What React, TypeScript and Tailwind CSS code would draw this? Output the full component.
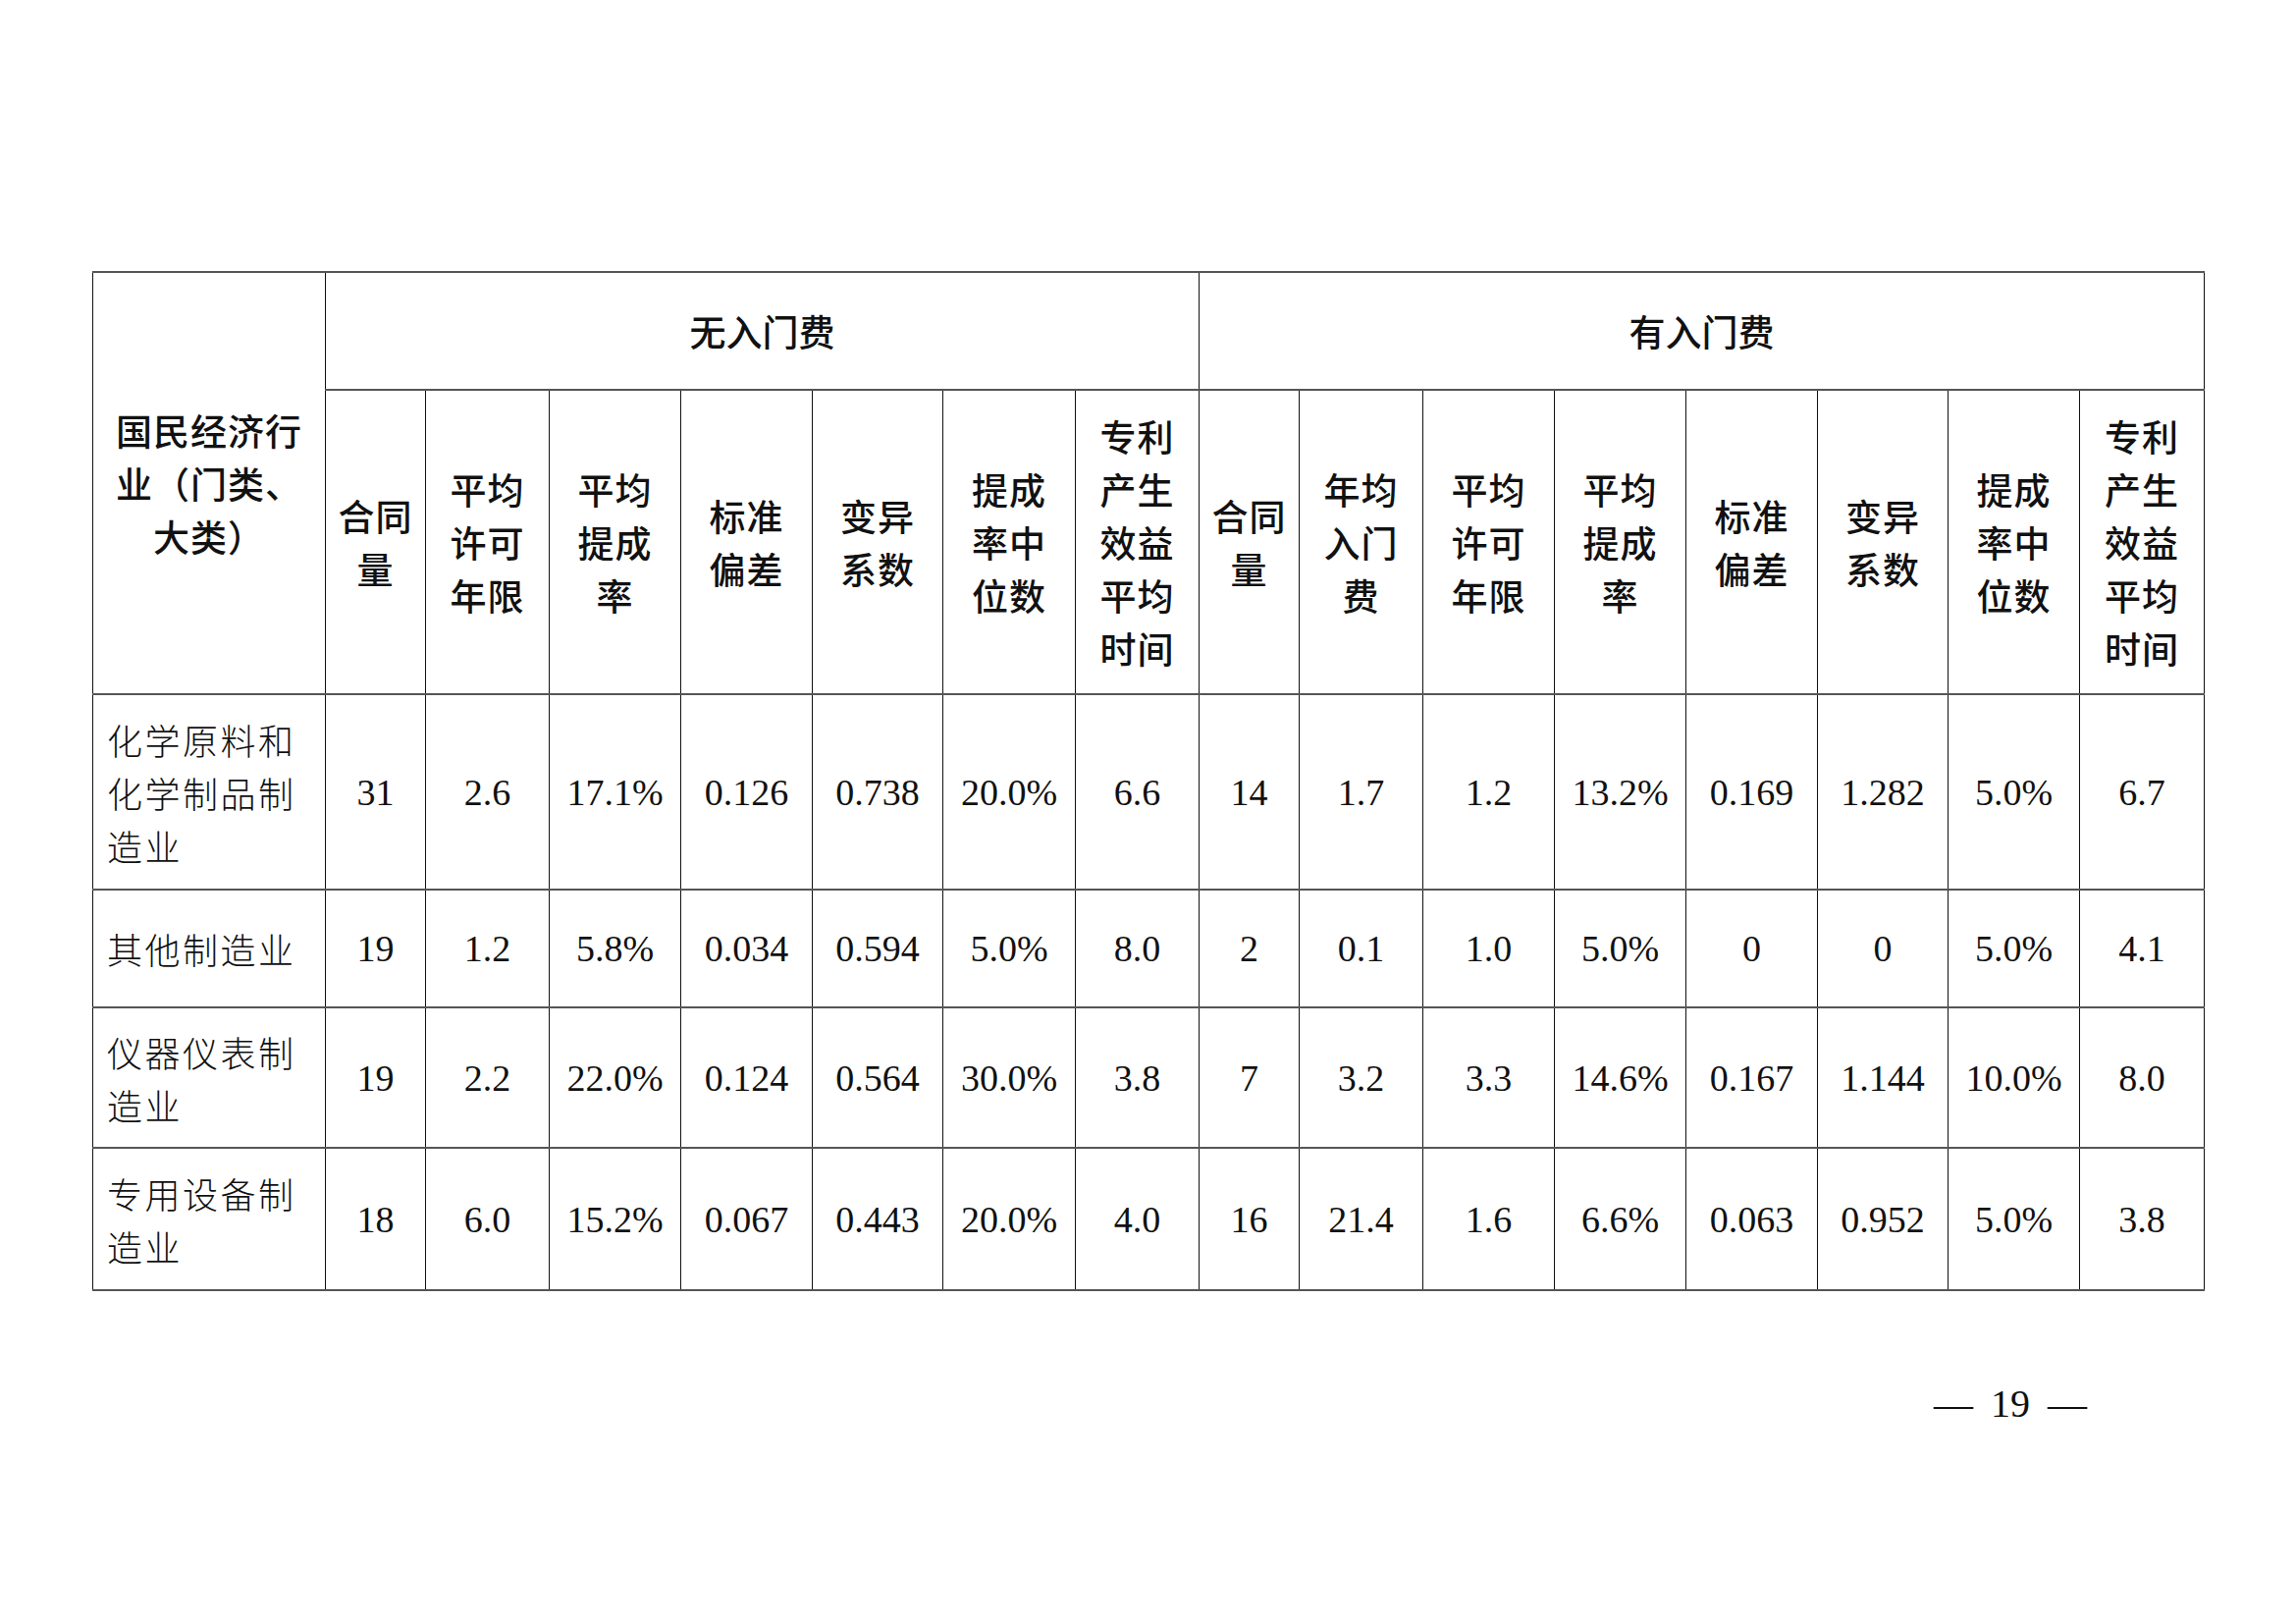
import React from 'react';

const cjkSans = "font-['Noto_Sans_CJK_SC','Noto_Sans',sans-serif]";
const serif = "font-['Liberation_Serif','Noto_Sans_CJK_SC',serif]";

export default function App() {
  const colWidths = [237, 102, 126, 134, 134, 133, 135, 126, 102, 126, 134, 134, 134, 133, 134, 127];

  // sub headers, one entry per line
  const noFee = [
    ['合同', '量'],
    ['平均', '许可', '年限'],
    ['平均', '提成', '率'],
    ['标准', '偏差'],
    ['变异', '系数'],
    ['提成', '率中', '位数'],
    ['专利', '产生', '效益', '平均', '时间'],
  ];
  const withFee = [
    ['合同', '量'],
    ['年均', '入门', '费'],
    ['平均', '许可', '年限'],
    ['平均', '提成', '率'],
    ['标准', '偏差'],
    ['变异', '系数'],
    ['提成', '率中', '位数'],
    ['专利', '产生', '效益', '平均', '时间'],
  ];

  const rows = [
    {
      name: ['化学原料和', '化学制品制', '造业'],
      h: 'h-[199px]',
      values: ['31', '2.6', '17.1%', '0.126', '0.738', '20.0%', '6.6', '14', '1.7', '1.2', '13.2%', '0.169', '1.282', '5.0%', '6.7'],
    },
    {
      name: ['其他制造业'],
      h: 'h-[120px]',
      values: ['19', '1.2', '5.8%', '0.034', '0.594', '5.0%', '8.0', '2', '0.1', '1.0', '5.0%', '0', '0', '5.0%', '4.1'],
    },
    {
      name: ['仪器仪表制', '造业'],
      h: 'h-[143px]',
      values: ['19', '2.2', '22.0%', '0.124', '0.564', '30.0%', '3.8', '7', '3.2', '3.3', '14.6%', '0.167', '1.144', '10.0%', '8.0'],
    },
    {
      name: ['专用设备制', '造业'],
      h: 'h-[145px]',
      values: ['18', '6.0', '15.2%', '0.067', '0.443', '20.0%', '4.0', '16', '21.4', '1.6', '6.6%', '0.063', '0.952', '5.0%', '3.8'],
    },
  ];

  const cell = 'border-x border-x-[#111] border-y-2 border-y-[#555]';

  return (
    <div className="min-h-screen w-full bg-white text-[#111]">
      <div className="px-[94px] pt-[276px]">
        <table className="w-full table-fixed border-collapse">
          <colgroup>
            {colWidths.map((w, i) => (
              <col key={i} style={{ width: w }} />
            ))}
          </colgroup>
          <thead>
            <tr className="h-[120px]">
              <th
                rowSpan={2}
                className={`${cell} ${cjkSans} px-[20px] text-center align-middle text-[37px] font-medium leading-[54px] tracking-[1px]`}
              >
                国民经济行业（门类、大类）
              </th>
              <th colSpan={7} className={`${cell} ${cjkSans} text-center align-middle text-[37px] font-medium leading-[54px]`}>
                无入门费
              </th>
              <th colSpan={8} className={`${cell} ${cjkSans} text-center align-middle text-[37px] font-medium leading-[54px]`}>
                有入门费
              </th>
            </tr>
            <tr className="h-[310px]">
              {[...noFee, ...withFee].map((lines, i) => (
                <th key={i} className={`${cell} ${cjkSans} text-center align-middle text-[37px] font-medium leading-[54px] tracking-[1px]`}>
                  {lines.map((l, j) => (
                    <div key={j}>{l}</div>
                  ))}
                </th>
              ))}
            </tr>
          </thead>
          <tbody>
            {rows.map((r, i) => (
              <tr key={i} className={r.h}>
                <td className={`${cell} ${cjkSans} pl-[14px] text-left align-middle text-[36px] font-light leading-[54px] tracking-[2.5px]`}>
                  {r.name.map((l, j) => (
                    <div key={j}>{l}</div>
                  ))}
                </td>
                {r.values.map((v, j) => (
                  <td key={j} className={`${cell} ${serif} text-center align-middle text-[38px] leading-[54px]`}>
                    {v}
                  </td>
                ))}
              </tr>
            ))}
          </tbody>
        </table>
      </div>
      <div className={`flex justify-end pr-[213px] pt-[90px] ${serif} text-[40px] leading-[50px]`}>
        <div className="flex items-center gap-[18px]">
          <span>—</span>
          <span>19</span>
          <span>—</span>
        </div>
      </div>
    </div>
  );
}
